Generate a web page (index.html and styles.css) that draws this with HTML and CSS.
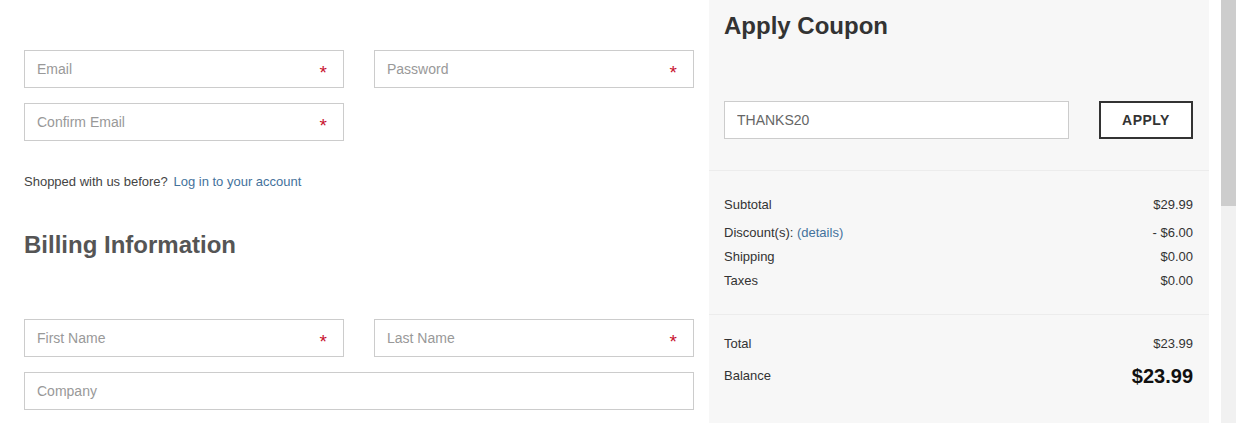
FILE: index.html
```html
<!DOCTYPE html>
<html lang="en">
<head>
    <meta charset="UTF-8">
    <meta name="viewport" content="width=device-width, initial-scale=1.0">
    <title>Checkout</title>
    <link rel="stylesheet" href="styles.css">
</head>
<body>
    <div class="page">
        <div class="checkout">
            <div class="row">
                <div class="field">
                    <input type="text" placeholder="Email">
                    <span class="req">*</span>
                </div>
                <div class="field">
                    <input type="password" placeholder="Password">
                    <span class="req">*</span>
                </div>
            </div>
            <div class="row">
                <div class="field">
                    <input type="text" placeholder="Confirm Email">
                    <span class="req">*</span>
                </div>
            </div>
            <p class="login-note">Shopped with us before? <a href="#">Log in to your account</a></p>

            <h2 class="billing-title">Billing Information</h2>

            <div class="row">
                <div class="field">
                    <input type="text" placeholder="First Name">
                    <span class="req">*</span>
                </div>
                <div class="field">
                    <input type="text" placeholder="Last Name">
                    <span class="req">*</span>
                </div>
            </div>
            <div class="row">
                <div class="field wide">
                    <input type="text" placeholder="Company">
                </div>
            </div>
        </div>

        <div class="summary">
            <div class="coupon">
                <h2>Apply Coupon</h2>
                <div class="coupon-form">
                    <input type="text" class="coupon-input" value="THANKS20">
                    <button class="apply-btn">APPLY</button>
                </div>
            </div>

            <div class="totals">
                <div class="line"><span>Subtotal</span><span>$29.99</span></div>
                <div class="line discount"><span>Discount(s): <a href="#">(details)</a></span><span>- $6.00</span></div>
                <div class="line"><span>Shipping</span><span>$0.00</span></div>
                <div class="line"><span>Taxes</span><span>$0.00</span></div>
            </div>

            <div class="totals grand">
                <div class="line"><span>Total</span><span>$23.99</span></div>
                <div class="line balance"><span>Balance</span><span class="big">$23.99</span></div>
            </div>
        </div>

        <div class="scrollbar"><div class="thumb"></div></div>
    </div>
</body>
</html>
```

FILE: styles.css
```css
:root {
    --color-text: #333;
    --color-muted: #999;
    --color-border: #ccc;
    --color-panel: #f7f7f7;
    --color-link: #44729c;
    --color-req: #c8102e;
}
body {
    margin: 0;
    font-family: 'Liberation Sans', Arial, sans-serif;
    color: var(--color-text);
    background: #fff;
    height: 423px;
    overflow: hidden;
}
.page {
    display: flex;
    height: 423px;
}
.checkout {
    width: 670px;
    margin-left: 24px;
    margin-right: 15px;
    padding-top: 50px;
}
.row {
    display: flex;
    gap: 30px;
    margin-bottom: 15px;
}
.field {
    width: 320px;
    height: 38px;
    box-sizing: border-box;
    border: 1px solid var(--color-border);
    background: #fff;
    display: flex;
    align-items: center;
}
.field.wide {
    width: 670px;
}
.field input {
    flex: 1;
    border: none;
    outline: none;
    background: transparent;
    font-family: inherit;
    font-size: 14px;
    padding: 0 12px;
    height: 100%;
    min-width: 0;
}
.field input::placeholder {
    color: var(--color-muted);
}
.req {
    color: var(--color-req);
    font-size: 19px;
    line-height: 1;
    margin-right: 16px;
    padding-top: 6px;
}
.login-note {
    font-size: 13px;
    color: #444;
    margin: 33px 0 0;
    line-height: 16px;
}
.login-note a {
    color: var(--color-link);
    text-decoration: none;
    margin-left: 2px;
}
.billing-title {
    font-size: 24px;
    color: #555;
    margin: 41px 0 60px;
    line-height: 28px;
}
.summary {
    width: 500px;
    background: var(--color-panel);
    margin-right: 12px;
}
.coupon {
    padding: 11px 16px 31px 15px;
}
.coupon h2 {
    margin: 0 0 61px;
    font-size: 24px;
    line-height: 29px;
    color: #333;
}
.coupon-form {
    display: flex;
    justify-content: space-between;
}
.coupon-input {
    width: 345px;
    height: 38px;
    box-sizing: border-box;
    border: 1px solid var(--color-border);
    padding: 0 12px;
    font-family: inherit;
    font-size: 14px;
    color: #666;
    outline: none;
}
.apply-btn {
    width: 94px;
    height: 38px;
    border: 2px solid #333;
    background: #fff;
    font-family: inherit;
    font-weight: bold;
    font-size: 14px;
    color: #333;
    letter-spacing: 0.5px;
    cursor: pointer;
}
.totals {
    border-top: 1px solid #ececec;
    padding: 24px 16px 19px 15px;
}
.line {
    display: flex;
    justify-content: space-between;
    align-items: center;
    font-size: 13px;
    line-height: 20px;
    margin-bottom: 4px;
}
.line.discount {
    margin-top: 8px;
}
.line a {
    color: var(--color-link);
    text-decoration: none;
}
.totals.grand {
    padding-top: 19px;
}
.line.balance {
    margin-top: 10px;
    line-height: 24px;
}
.big {
    font-size: 20px;
    font-weight: bold;
    color: #111;
}
.scrollbar {
    width: 15px;
    background: #f1f1f1;
}
.thumb {
    height: 206px;
    background: #cdcdcd;
}
```
